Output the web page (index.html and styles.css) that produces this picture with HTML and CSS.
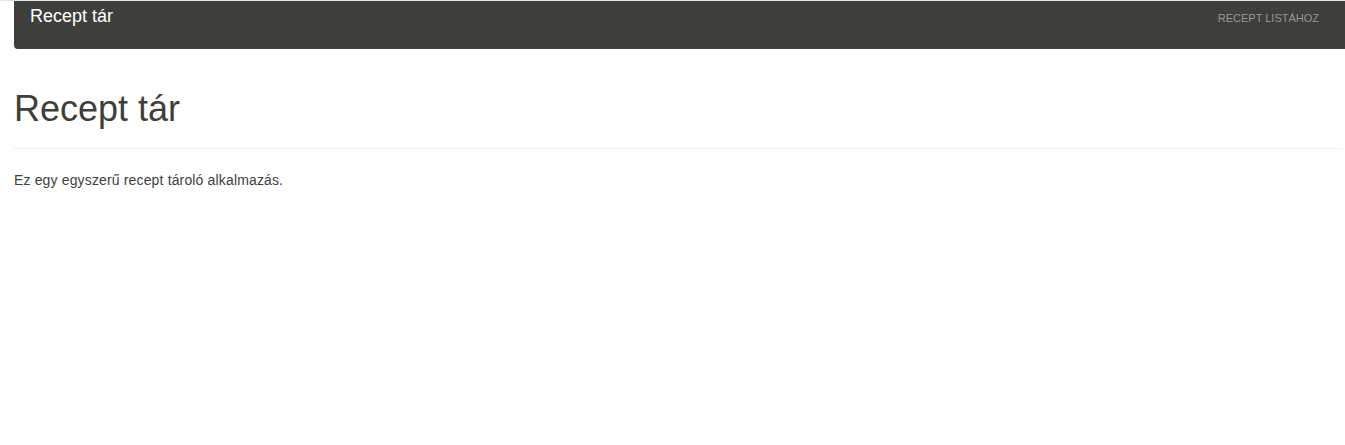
FILE: index.html
```html
<!DOCTYPE html>
<html lang="hu">
<head>
<meta charset="utf-8">
<title>Recept tár</title>
<link rel="stylesheet" href="styles.css">
</head>
<body>
<div class="page">
  <nav class="navbar">
    <a class="brand" href="#">Recept tár</a>
    <a class="nav-link" href="#">Recept listához</a>
  </nav>
  <main class="content">
    <h1 class="title">Recept tár</h1>
    <hr class="divider">
    <p class="lead">Ez egy egyszerű recept tároló alkalmazás.</p>
  </main>
</div>
</body>
</html>
```
FILE: styles.css
```css
html, body {
  margin: 0;
  padding: 0;
  background: #fff;
}
body {
  font-family: "Liberation Sans", Arial, sans-serif;
  font-size: 14px;
  color: #3e3f3a;
  border-top: 1px solid #e6e6e6;
}
.page {
  padding-left: 14px;
}
.navbar {
  display: flex;
  justify-content: space-between;
  align-items: flex-start;
  height: 49px;
  margin-top: -1px;
  background: #3e3f3a;
  border-bottom-left-radius: 4px;
}
.brand {
  color: #fff;
  text-decoration: none;
  font-size: 18px;
  line-height: 20px;
  padding: 6px 16px 0 16px;
}
.nav-link {
  color: #98978b;
  text-decoration: none;
  text-transform: uppercase;
  font-size: 11px;
  line-height: 16px;
  padding: 10px 26px 0 0;
}
.content {
  padding-right: 2px;
}
.title {
  margin: 40px 0 0 0;
  font-size: 36px;
  font-weight: 400;
  line-height: 40px;
}
.divider {
  margin: 19px 0 0 0;
  border: 0;
  border-top: 1px solid #eeeeee;
}
.lead {
  margin: 21px 0 0 0;
  line-height: 20px;
  letter-spacing: 0.15px;
}
```
